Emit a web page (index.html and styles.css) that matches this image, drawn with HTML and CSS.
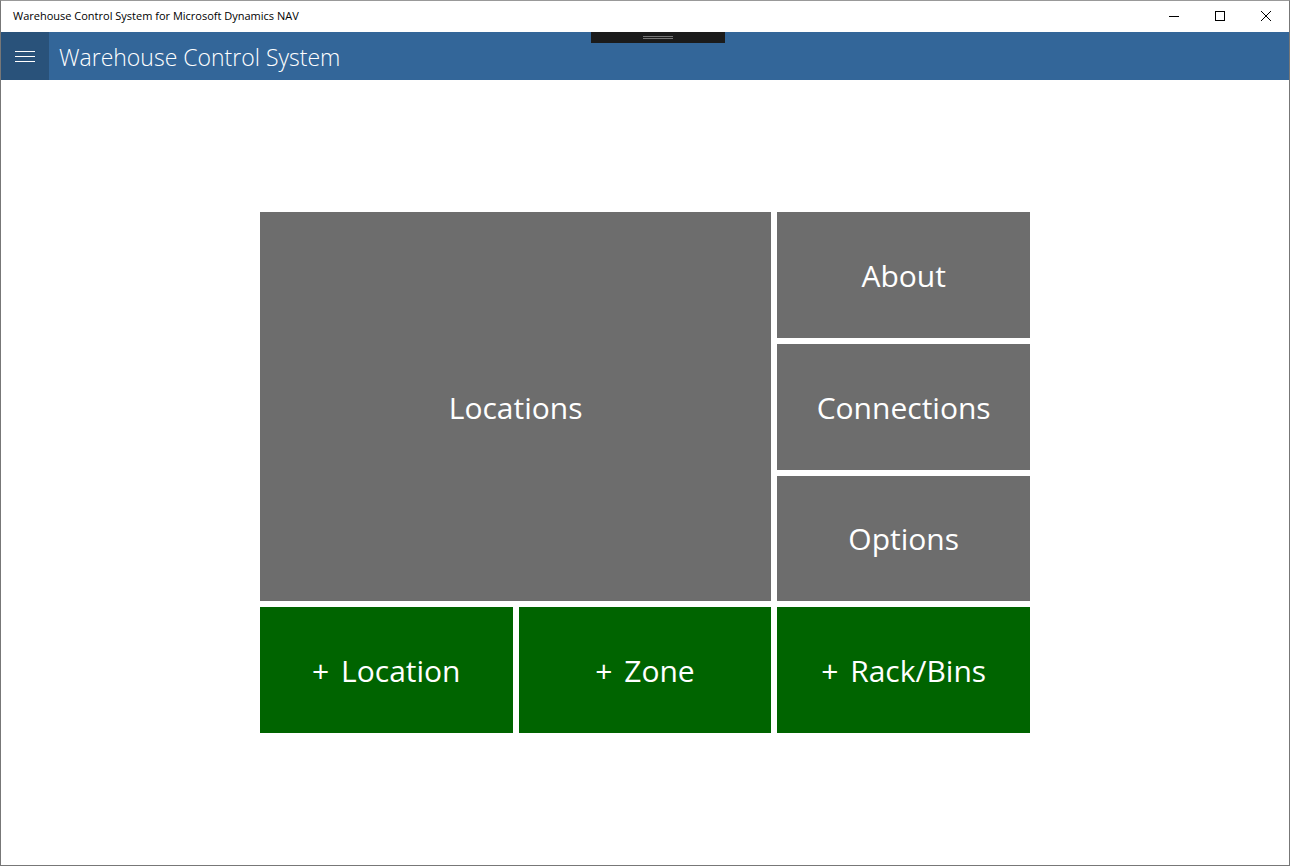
FILE: index.html
```html
<!DOCTYPE html>
<html lang="en">
<head>
<meta charset="utf-8">
<title>Warehouse Control System</title>
<link rel="stylesheet" href="styles.css">
</head>
<body>
<div class="window">
  <header class="titlebar">
    <span class="titlebar-text">Warehouse Control System for Microsoft Dynamics NAV</span>
    <div class="window-controls">
      <button class="window-button" type="button" aria-label="Minimize"><svg width="10" height="10" viewBox="0 0 10 10" shape-rendering="crispEdges"><path d="M0 5.500H10"/></svg></button>
      <button class="window-button" type="button" aria-label="Maximize"><svg width="10" height="10" viewBox="0 0 10 10" shape-rendering="crispEdges"><path d="M.5 .5h9v9h-9z"/></svg></button>
      <button class="window-button" type="button" aria-label="Close"><svg width="10" height="10" viewBox="0 0 10 10"><path d="M0 0L10 10M10 0L0 10"/></svg></button>
    </div>
  </header>
  <div class="appbar">
    <button class="menu-button" type="button" aria-label="Menu"><svg width="20" height="12" viewBox="0 0 20 12" shape-rendering="crispEdges"><path d="M0 1.500H20M0 6.500H20M0 11.500H20"/></svg></button>
    <h1 class="app-title">Warehouse Control System</h1>
    <div class="debug-handle"><span class="debug-grip"></span></div>
  </div>
  <main class="content">
    <div class="tiles">
      <button class="tile tile-large" type="button">Locations</button>
      <button class="tile" type="button">About</button>
      <button class="tile" type="button">Connections</button>
      <button class="tile" type="button">Options</button>
      <button class="tile tile-add" type="button"><span class="plus">+</span> Location</button>
      <button class="tile tile-add" type="button"><span class="plus">+</span> Zone</button>
      <button class="tile tile-add" type="button"><span class="plus">+</span> Rack/Bins</button>
    </div>
  </main>
</div>
</body>
</html>
```
FILE: styles.css
```css
* { box-sizing: border-box; }

body {
  margin: 0;
  background: #fff;
  font-family: "Segoe UI", "Open Sans", "Noto Sans", sans-serif;
}

button {
  padding: 0;
  border: 0;
  font: inherit;
}

.window {
  display: flex;
  flex-direction: column;
  min-height: 100vh;
  border: 1px solid #777;
  border-top-color: #999;
}

.titlebar {
  display: flex;
  align-items: center;
  justify-content: space-between;
  height: 31px;
  padding: 0 0 1px 12px;
}

.titlebar-text {
  font-size: 11px;
  line-height: 16px;
  color: #000;
}

.window-controls {
  display: flex;
  height: 100%;
}

.window-button {
  display: flex;
  align-items: center;
  justify-content: center;
  width: 46px;
  background: transparent;
}

.window-button svg,
.menu-button svg {
  fill: none;
  stroke: #000;
  stroke-width: 1;
}

.appbar {
  position: relative;
  display: flex;
  align-items: center;
  height: 48px;
  background: #336699;
}

.menu-button {
  display: flex;
  align-items: center;
  justify-content: center;
  width: 48px;
  height: 48px;
  background: #29527a;
}

.menu-button svg { stroke: #fff; }

.app-title {
  margin: 0;
  padding: 2px 0 0 10px;
  font-size: 23px;
  font-weight: 300;
  line-height: 32px;
  color: #fff;
}

.debug-handle {
  position: absolute;
  top: 0;
  left: calc(50% - 54px);
  display: flex;
  align-items: center;
  justify-content: center;
  width: 134px;
  height: 11px;
  background: #1b1b1b;
}

.debug-grip {
  width: 30px;
  height: 3px;
  border: solid #777;
  border-width: 1px 0;
}

.content {
  display: flex;
  flex: 1;
  align-items: center;
  justify-content: center;
}

.tiles {
  display: grid;
  grid-template-columns: repeat(3, 1fr);
  grid-template-rows: repeat(4, 1fr);
  gap: 6px;
  width: 770px;
  height: 521px;
}

.tile {
  padding-top: 2px;
  background: #6d6d6d;
  font-size: 30px;
  line-height: 44px;
  color: #fff;
}

.tile-large {
  grid-row: span 3;
  grid-column: span 2;
}

.tile-add { background: #006400; }

.plus { margin-right: 4px; }
```
